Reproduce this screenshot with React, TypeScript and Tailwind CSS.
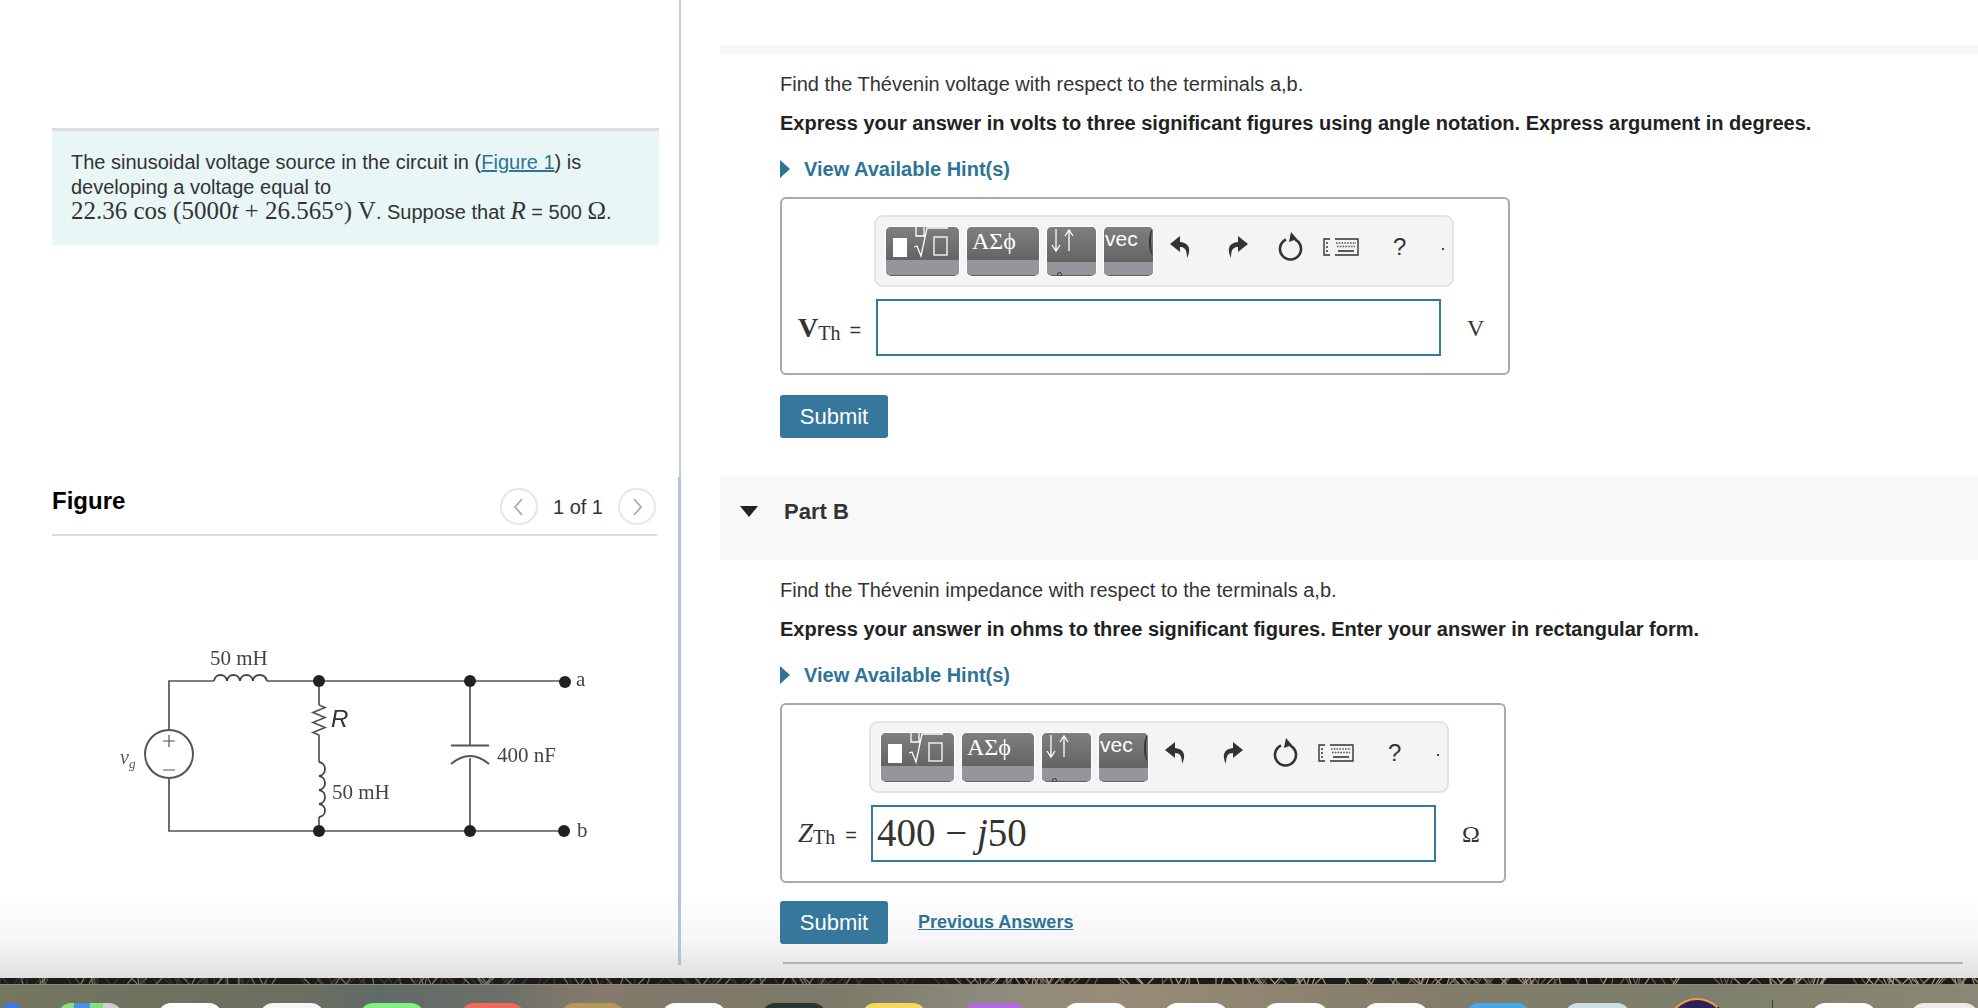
const sans = "font-['Liberation_Sans',Arial,sans-serif]"
const serif = "font-['Liberation_Serif','Times_New_Roman',serif]"

function ToolButton({ width, short, dot, children }: { width: string; short?: boolean; dot?: boolean; children?: React.ReactNode }) {
  return (
    <div className={`${width} h-[49px] shrink-0 rounded-[5px] overflow-hidden flex flex-col bg-[#5f5f5f] pb-[1px] shadow-[0_0_0_1px_#ffffff]`}>
      <div className="flex-1 relative overflow-hidden bg-[linear-gradient(180deg,#7f7f7f,#646464)] text-white">{children}</div>
      <div className={short ? "h-[13px] bg-[#96959b] relative" : "h-[15px] bg-[#96959b]"}>
        {dot && <div className="absolute left-[10px] bottom-[-2px] w-[5px] h-[5px] rounded-full border border-[#333]" />}
      </div>
    </div>
  )
}

function Toolbar() {
  return (
    <div className="w-[580px] h-[72px] rounded-[9px] border-2 border-[#e3e3e3] bg-[#f4f4f4] pt-[10px] pl-[10px] flex items-start text-[#333]">
      <div className="flex gap-[8px]">
        <ToolButton width="w-[73px]">
          <svg width="73" height="34" viewBox="0 0 73 34" className="absolute inset-0">
            <rect x="7" y="11" width="14" height="19" fill="#fff" />
            <path d="M30 0v9h8V0M28 20l3-1 4 10 6-28h21" fill="none" stroke="#fff" strokeWidth="1.3" />
            <rect x="48" y="10" width="13" height="18" fill="none" stroke="#fff" strokeWidth="1.3" />
          </svg>
        </ToolButton>
        <ToolButton width="w-[72px]">
          <span className={`absolute left-[5px] top-[-4px] text-[24px] ${serif}`}>ΑΣϕ</span>
        </ToolButton>
        <ToolButton width="w-[49px]" short dot>
          <svg width="30" height="30" viewBox="0 0 30 30" className="absolute left-[3px] top-0">
            <path d="M6 2v21M2 18l4 6 4-6M19 24V3M15 9l4-6 4 6" fill="none" stroke="#fff" strokeWidth="1.3" />
          </svg>
        </ToolButton>
        <ToolButton width="w-[49px]" short>
          <span className={`absolute left-[1px] top-[-3px] text-[21px] leading-[30px] ${sans}`}>vec</span>
          <span className="absolute right-[-4px] top-[2px] w-[8px] h-[26px] rounded-[50%] border-l-2 border-[#333]" />
        </ToolButton>
      </div>
      <div className="ml-[16px] mt-[5px] flex items-center">
        {/* undo */}
        <svg width="24" height="26" viewBox="0 0 24 26">
          <path d="M11 2 1 10l10 8v-5c5 0 7 3 7 11 4-8 3-15-7-16z" fill="#333" />
        </svg>
        {/* redo */}
        <svg width="24" height="26" viewBox="0 0 24 26" className="ml-[32px]">
          <path d="M13 2l10 8-10 8v-5c-5 0-7 3-7 11-4-8-3-15 7-16z" fill="#333" />
        </svg>
        {/* reset */}
        <svg width="28" height="30" viewBox="0 0 28 30" className="ml-[28px]">
          <path d="M9 7.5a10.5 10.5 0 1 0 9 0" fill="none" stroke="#333" strokeWidth="2.6" />
          <path d="M14 0l6 7-8 3z" fill="#333" />
        </svg>
        {/* keyboard */}
        <svg width="36" height="18" viewBox="0 0 36 18" className="ml-[18px]">
          <path d="M7 1H1v16h6M12 1h23v16H12" fill="none" stroke="#333" strokeWidth="1.4" />
          <path d="M3 5h2M3 9h2M3 13h2" stroke="#333" strokeWidth="1.6" />
          <path d="M13 5h20M14 8.5h18" stroke="#555" strokeWidth="1.6" strokeDasharray="1.6 1.2" />
          <path d="M15 13h16" stroke="#333" strokeWidth="1.6" />
        </svg>
        <span className={`ml-[34px] text-[24px] leading-none text-[#333] ${sans}`}>?</span>
        <span className="ml-[36px] mt-[3px] w-[2px] h-[2px] bg-[#444]" />
      </div>
    </div>
  )
}

function AnswerBox({
  boxClass,
  labelLeft,
  label,
  unit,
  value,
}: {
  boxClass: string
  labelLeft: string
  label: React.ReactNode
  unit: string
  value?: React.ReactNode
}) {
  return (
    <div className={`${boxClass} rounded-[6px] border-2 border-[#aaaaaa] bg-white pt-[16px]`}>
      <Toolbar />
      <div className="mt-[12px] ml-[2px] flex items-center relative">
        <div className={`absolute ${labelLeft} top-[8px] flex items-baseline text-[#333] whitespace-nowrap`}>{label}</div>
        <div className="w-[565px] h-[57px] border-2 border-[#36789b] bg-white pl-[4px] flex items-center overflow-hidden">{value}</div>
        <span className={`ml-[26px] text-[24px] text-[#333] ${serif}`}>{unit}</span>
      </div>
    </div>
  )
}

function Hint() {
  return (
    <div className="mt-[22px] h-[24px] flex items-center">
      <svg width="11" height="18" viewBox="0 0 11 18"><path d="M0 0l10 9-10 9z" fill="#2f7396" /></svg>
      <span className="ml-[13px] text-[20px] font-bold text-[#2f7396]">View Available Hint(s)</span>
    </div>
  )
}

function Coil({ d }: { d: string }) {
  return <path d={d} fill="none" stroke="#444" strokeWidth="1.8" />
}

function Circuit() {
  const label = `${serif} text-[21px] fill-[#444]`
  return (
    <svg width="560" height="250" viewBox="80 620 560 250" className="block blur-[0.35px]">
      <g fill="none" stroke="#555" strokeWidth="1.7">
        <path d="M169 730V681H214M267 681H565" />
        <path d="M169 778V831H565" />
        <path d="M319 681V705M319 735V762M319 817V831" />
        <path d="M470 681V745M470 758V831" />
        <circle cx="169" cy="754" r="24" strokeWidth="2" />
        <path d="M451 745.5H489" strokeWidth="2" />
        <path d="M451 764Q470 748 489 764" strokeWidth="2" />
        <path d="M163 741H175M169 735V747M163 770H175" strokeWidth="1.2" />
        <path d="M319 705l6 2.5-12 5 12 5-12 5 12 5-12 5 6 2.5" />
      </g>
      <Coil d="M214 681c1-8 12-8 13 0c1-8 12-8 13 0c1-8 12-8 13 0c1-8 12-8 14 0" />
      <Coil d="M319 762c8 1 8 13 0 14c8 1 8 13 0 14c8 1 8 13 0 14c8 1 8 12 0 13" />
      <g fill="#222">
        <circle cx="319" cy="681" r="6" />
        <circle cx="470" cy="681" r="6" />
        <circle cx="565" cy="682" r="6" />
        <circle cx="319" cy="831" r="6" />
        <circle cx="470" cy="831" r="6" />
        <circle cx="564" cy="831" r="6" />
      </g>
      <text x="210" y="665" className={label}>50 mH</text>
      <text x="331" y="727" className={`${sans} text-[24px] italic fill-[#333]`}>R</text>
      <text x="497" y="762" className={label}>400 nF</text>
      <text x="332" y="799" className={label}>50 mH</text>
      <text x="576" y="686" className={label}>a</text>
      <text x="577" y="837" className={label}>b</text>
      <text x="120" y="764" className={`${serif} text-[20px] italic fill-[#555]`}>v</text>
      <text x="129" y="768" className={`${serif} text-[13px] italic fill-[#555]`}>g</text>
    </svg>
  )
}

function NavCircle({ path }: { path: string }) {
  return (
    <div className="w-[38px] h-[37px] rounded-full border-2 border-[#e6e6e6] flex items-center justify-center">
      <svg width="12" height="18" viewBox="0 0 12 18"><path d={path} fill="none" stroke="#aaaaaa" strokeWidth="1.8" /></svg>
    </div>
  )
}

function LeftPanel() {
  return (
    <div className="w-[678px] shrink-0 pl-[52px] pr-[19px] pt-[128px]">
      <div className="w-[607px] h-[117px] border-t-[3px] border-[#dddddd] bg-[#e8f6f6] pl-[19px] pt-[19px] text-[20px] leading-[24.5px] text-[#333]">
        The sinusoidal voltage source in the circuit in (<span className="text-[#2f7396] underline">Figure 1</span>) is
        <br />
        developing a voltage equal to
        <br />
        <span className={`text-[25px] ${serif}`}>22.36 cos (5000<i>t</i> + 26.565°) V</span>. Suppose that{" "}
        <i className={`text-[25px] ${serif}`}>R</i> = 500 <span className={`text-[25px] ${serif}`}>Ω</span>.
      </div>
      <div className="mt-[231px] w-[605px] h-[60px] border-b-2 border-[#dddddd] flex">
        <h2 className="text-[24px] leading-[50px] font-bold text-black">Figure</h2>
        <div className="ml-auto mt-[12px] h-[37px] flex items-center gap-[15px] pr-[1px]">
          <NavCircle path="M9 1 2 9l7 8" />
          <span className="text-[20px] text-[#333]">1 of 1</span>
          <NavCircle path="M3 1l7 8-7 8" />
        </div>
      </div>
      <div className="mt-[84px] ml-[28px]">
        <Circuit />
      </div>
    </div>
  )
}

function RightPanel() {
  return (
    <div className="flex-1 min-w-0 pl-[39px] pt-[45px]">
      <div className="h-[9px] bg-[#f7f7f7]" />
      <div className="pl-[60px] pt-[18px] text-[#333]">
        <p className="h-[24px] leading-[24px] text-[20px]">Find the Thévenin voltage with respect to the terminals a,b.</p>
        <p className="mt-[15px] h-[24px] leading-[24px] text-[20px] font-bold text-[#222]">
          Express your answer in volts to three significant figures using angle notation. Express argument in degrees.
        </p>
        <Hint />
        <div className="mt-[16px]">
          <AnswerBox
            boxClass="w-[730px] h-[178px] pl-[92px]"
            labelLeft="left-[-78px]"
            unit="V"
            label={
              <>
                <b className={`text-[28px] ${serif}`}>V</b>
                <span className={`relative top-[3px] text-[20px] ${serif}`}>Th</span>
                <span className="ml-[9px] text-[20px]">=</span>
              </>
            }
          />
        </div>
        <button className="mt-[20px] block w-[108px] h-[43px] rounded-[3px] bg-[#36789b] text-white text-[22px]">Submit</button>
      </div>
      <div className="mt-[39px] h-[83px] bg-[#f8f8f8] flex items-center pl-[20px] pb-[14px]">
        <svg width="18" height="11" viewBox="0 0 18 11"><path d="M0 0h18L9 11z" fill="#222" /></svg>
        <span className="ml-[26px] text-[22px] font-bold text-[#333]">Part B</span>
      </div>
      <div className="pl-[60px] pt-[18px] text-[#333]">
        <p className="h-[24px] leading-[24px] text-[20px]">Find the Thévenin impedance with respect to the terminals a,b.</p>
        <p className="mt-[15px] h-[24px] leading-[24px] text-[20px] font-bold text-[#222]">
          Express your answer in ohms to three significant figures. Enter your answer in rectangular form.
        </p>
        <Hint />
        <div className="mt-[16px]">
          <AnswerBox
            boxClass="w-[726px] h-[180px] pl-[87px]"
            labelLeft="left-[-73px]"
            unit="Ω"
            label={
              <>
                <i className={`text-[27px] ${serif}`}>Z</i>
                <span className={`relative top-[2px] text-[20px] ${serif}`}>Th</span>
                <span className="ml-[10px] text-[20px]">=</span>
              </>
            }
            value={
              <span className={`text-[39px] text-[#333] ${serif}`}>
                400 − <i>j</i>50
              </span>
            }
          />
        </div>
        <div className="mt-[18px] flex items-center">
          <button className="w-[108px] h-[43px] rounded-[3px] bg-[#36789b] text-white text-[22px]">Submit</button>
          <a className="ml-[30px] text-[18px] font-bold text-[#2f7396] underline">Previous Answers</a>
        </div>
        <div className="mt-[18px] ml-[3px] w-[1180px] h-[2px] bg-[#b4b4b4]" />
      </div>
    </div>
  )
}

// dock tiles, x position is implied by the gaps
const tiles = [
  { w: "w-[23px]", ml: "ml-[0px]", bg: "bg-[#3b7be8]" },
  { w: "w-[64px]", ml: "ml-[35px]", bg: "bg-[linear-gradient(90deg,#84e27a_0%,#84e27a_25%,#4a90e8_25%,#4a90e8_50%,#84e27a_50%,#84e27a_70%,#cfcfcf_70%,#cfcfcf_100%)]" },
  { w: "w-[64px]", ml: "ml-[36px]", bg: "bg-white" },
  { w: "w-[64px]", ml: "ml-[38px]", bg: "bg-[#f5f5f5]" },
  { w: "w-[64px]", ml: "ml-[36px]", bg: "bg-[#84ee84]" },
  { w: "w-[63px]", ml: "ml-[37px]", bg: "bg-[#ee6a5a]" },
  { w: "w-[63px]", ml: "ml-[37px]", bg: "bg-[#b39a5c]" },
  { w: "w-[64px]", ml: "ml-[38px]", bg: "bg-white" },
  { w: "w-[64px]", ml: "ml-[36px]", bg: "bg-[#26352f]" },
  { w: "w-[64px]", ml: "ml-[36px]", bg: "bg-[#f5d862]" },
  { w: "w-[63px]", ml: "ml-[37px]", bg: "bg-[#b46be0]" },
  { w: "w-[64px]", ml: "ml-[38px]", bg: "bg-white" },
  { w: "w-[64px]", ml: "ml-[36px]", bg: "bg-white" },
  { w: "w-[64px]", ml: "ml-[36px]", bg: "bg-white" },
  { w: "w-[64px]", ml: "ml-[36px]", bg: "bg-[#fbfaf6]" },
  { w: "w-[64px]", ml: "ml-[38px]", bg: "bg-[#4aa8ea]" },
  { w: "w-[65px]", ml: "ml-[35px]", bg: "bg-[#cfdfe6]" },
]

function Wallpaper() {
  const strokes = []
  for (let i = 0; i < 420; i++) {
    const x = Math.abs(Math.sin(i * 12.9898) * 43758.5453) % 1978
    const lean = Math.round(Math.sin(i * 7.13) * 6)
    const tone = Math.abs(Math.sin(i * 3.7))
    const bright = x > 990 ? (tone > 0.6 ? "#a8977c" : "#6d6252") : tone > 0.85 ? "#7a7a68" : "#3a3a32"
    strokes.push(<path key={i} d={`M${x.toFixed(1)} 0l${lean} 6`} stroke={bright} strokeWidth="1.2" />)
  }
  return (
    <svg width="1978" height="6" viewBox="0 0 1978 6" className="block bg-[#1d1b17]">
      {strokes}
    </svg>
  )
}

function Dock() {
  return (
    <div className="h-[24px] overflow-hidden border-t border-[#8b8d7c] bg-[linear-gradient(90deg,#74765f_0%,#6b6f60_15%,#626a68_19%,#6a6f68_25%,#85796c_30%,#7b7a68_42%,#8c8b7e_50%,#998c78_56%,#837d6a_72%,#7c7e6b_85%,#8a8874_100%)]">
      <div className="flex pt-[18px]">
        {tiles.map((t, i) => (
          <div key={i} className={`${t.w} ${t.ml} ${t.bg} h-[40px] shrink-0 rounded-t-[13px]`} />
        ))}
        <div className="ml-[37px] -mt-[5px] w-[60px] h-[60px] shrink-0 rounded-full bg-[#2c2158] border-2 border-[#1a1a2a] border-l-[#e8a048] border-t-[#e8a048]" />
        <div className="ml-[45px] w-[1px] h-[10px] -mt-[3px] shrink-0 bg-[#3c3c3c]" />
        <div className="ml-[39px] w-[64px] h-[40px] shrink-0 rounded-t-[13px] bg-white" />
        <div className="ml-[35px] w-[67px] h-[40px] shrink-0 rounded-t-[13px] bg-[#ececec]" />
      </div>
    </div>
  )
}

export default function App() {
  return (
    <div className={`w-[1978px] h-[1008px] overflow-hidden bg-white flex flex-col ${sans}`}>
      <div className="h-[978px] relative overflow-hidden">
        {/* bottom fade sits behind the page content */}
        <div className="absolute left-0 right-0 bottom-0 h-[85px] bg-[linear-gradient(180deg,#ffffff,#f6f6f6_55%,#e0e0e0)]" />
        <div className="relative flex h-full">
          <LeftPanel />
          <div className="w-[3px] shrink-0 h-[965px]">
            <div className="ml-[1px] w-[2px] h-[477px] bg-[#c3d1e0]" />
            <div className="h-[488px] bg-[#b5c3d8]" />
          </div>
          <RightPanel />
        </div>
      </div>
      <Wallpaper />
      <Dock />
    </div>
  )
}
